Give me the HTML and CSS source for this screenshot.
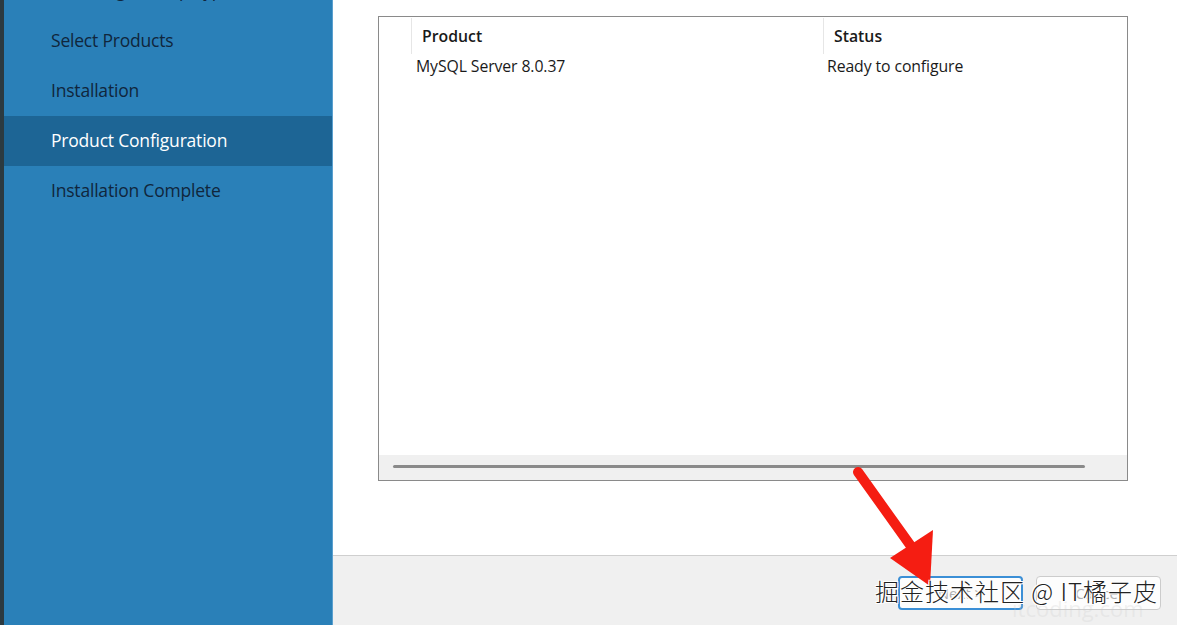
FILE: index.html
```html
<!DOCTYPE html>
<html lang="en">
<head>
<meta charset="utf-8">
<title>MySQL Installer - Product Configuration</title>
<link rel="stylesheet" href="styles.css">
</head>
<body>
<div class="window">
  <aside class="sidebar">
    <ul class="steps">
      <li class="step">Choosing a Setup Type</li>
      <li class="step">Select Products</li>
      <li class="step">Installation</li>
      <li class="step active">Product Configuration</li>
      <li class="step">Installation Complete</li>
    </ul>
  </aside>
  <main class="main">
    <section class="content">
      <div class="listview">
        <div class="lv-header">
          <div class="lv-gutter"></div>
          <div class="lv-col lv-col-product">Product</div>
          <div class="lv-col lv-col-status">Status</div>
        </div>
        <div class="lv-body">
          <div class="lv-row">
            <div class="lv-gutter"></div>
            <div class="lv-cell lv-col-product">MySQL Server 8.0.37</div>
            <div class="lv-cell lv-col-status">Ready to configure</div>
          </div>
        </div>
        <div class="lv-hscroll">
          <div class="lv-thumb"></div>
        </div>
      </div>
    </section>
    <footer class="footer">
      <button class="btn btn-primary">Next &gt;</button>
      <button class="btn">Cancel</button>
    </footer>
  </main>
</div>

<svg class="pointer" width="110" height="130" viewBox="0 0 110 130" aria-hidden="true">
  <line x1="8" y1="8" x2="68" y2="92" stroke="#f51d12" stroke-width="10" stroke-linecap="round"/>
  <polygon points="83,66 80,122 40,94" fill="#f51d12"/>
</svg>
<div class="mark-sub">itcoding.com</div>
<div class="mark">掘金技术社区 @ IT橘子皮</div>
</body>
</html>
```
FILE: styles.css
```css
* { box-sizing: border-box; }

html, body {
  margin: 0;
  padding: 0;
  width: 1177px;
  height: 625px;
  overflow: hidden;
  background: #ffffff;
  font-family: "Open Sans", "Noto Sans", sans-serif;
}

.window {
  display: flex;
  height: 625px;
  border-left: 4px solid #2c3a40;
}

/* Left step navigation */
.sidebar {
  width: 329px;
  flex: none;
  background: #2a80b8;
  border-right: 1px solid #5aa0cf;
  overflow: hidden;
}

.steps {
  list-style: none;
  margin: -34px 0 0 0;
  padding: 0;
}

.step {
  height: 50px;
  line-height: 49px;
  padding-left: 47px;
  font-size: 17.5px;
  letter-spacing: -0.2px;
  color: #10263c;
  white-space: nowrap;
}

.step.active {
  background: #1d6595;
  color: #ffffff;
}

/* Right page */
.main {
  flex: 1;
  display: flex;
  flex-direction: column;
}

.content {
  height: 555px;
  padding: 16px 49px 0 45px;
  background: #ffffff;
}

.listview {
  height: 465px;
  border: 1px solid #8a8a8a;
  display: flex;
  flex-direction: column;
  background: #ffffff;
}

.lv-header,
.lv-row {
  display: flex;
  font-size: 15.8px;
  color: #1a1a1a;
}

.lv-header {
  height: 37px;
  padding-top: 1px;
}

.lv-gutter {
  width: 32px;
  flex: none;
}

.lv-col {
  border-left: 1px solid #e6e6e6;
  line-height: 36px;
  padding-left: 10px;
  font-weight: 600;
  letter-spacing: 0;
}

.lv-col-product { width: 412px; flex: none; }
.lv-col-status { flex: 1; }

.lv-body {
  flex: 1;
}

.lv-row {
  height: 24px;
  line-height: 24px;
  letter-spacing: -0.1px;
}

.lv-cell.lv-col-product { padding-left: 5px; }
.lv-cell.lv-col-status { padding-left: 4px; }

.lv-hscroll {
  height: 25px;
  background: #f0f0f0;
  display: flex;
  align-items: center;
  padding: 0 42px 2px 14px;
}

.lv-thumb {
  flex: 1;
  height: 3px;
  border-radius: 2px;
  background: #8a8a8a;
}

/* Bottom button bar */
.footer {
  flex: 1;
  background: #f0f0f0;
  border-top: 1px solid #cfcfcf;
  display: flex;
  align-items: flex-start;
  justify-content: flex-end;
  gap: 13px;
  padding: 20px 16px 0 0;
}

.btn {
  width: 125px;
  height: 34px;
  border: 1px solid #cccccc;
  border-radius: 4px;
  background: #fdfdfd;
  color: #b0b0b0;
  font-family: "Open Sans", "Noto Sans", sans-serif;
  font-size: 15px;
}

.btn-primary {
  border: 2px solid #3b8fd6;
}

/* Overlays drawn on top of the window */
.pointer {
  position: absolute;
  left: 850px;
  top: 464px;
}

.mark {
  position: absolute;
  left: 875px;
  top: 574px;
  font-family: "Noto Sans CJK SC", sans-serif;
  font-size: 24px;
  font-weight: 300;
  line-height: 34px;
  color: #222222;
  letter-spacing: 1px;
  text-shadow: 1px 1px 0 #ffffff, -1px -1px 0 #ffffff, 1px -1px 0 #ffffff, -1px 1px 0 #ffffff;
}

.mark-sub {
  position: absolute;
  left: 1012px;
  top: 594px;
  font-family: "Open Sans", sans-serif;
  font-size: 22px;
  line-height: 28px;
  color: rgba(200, 200, 200, 0.25);
}
```
